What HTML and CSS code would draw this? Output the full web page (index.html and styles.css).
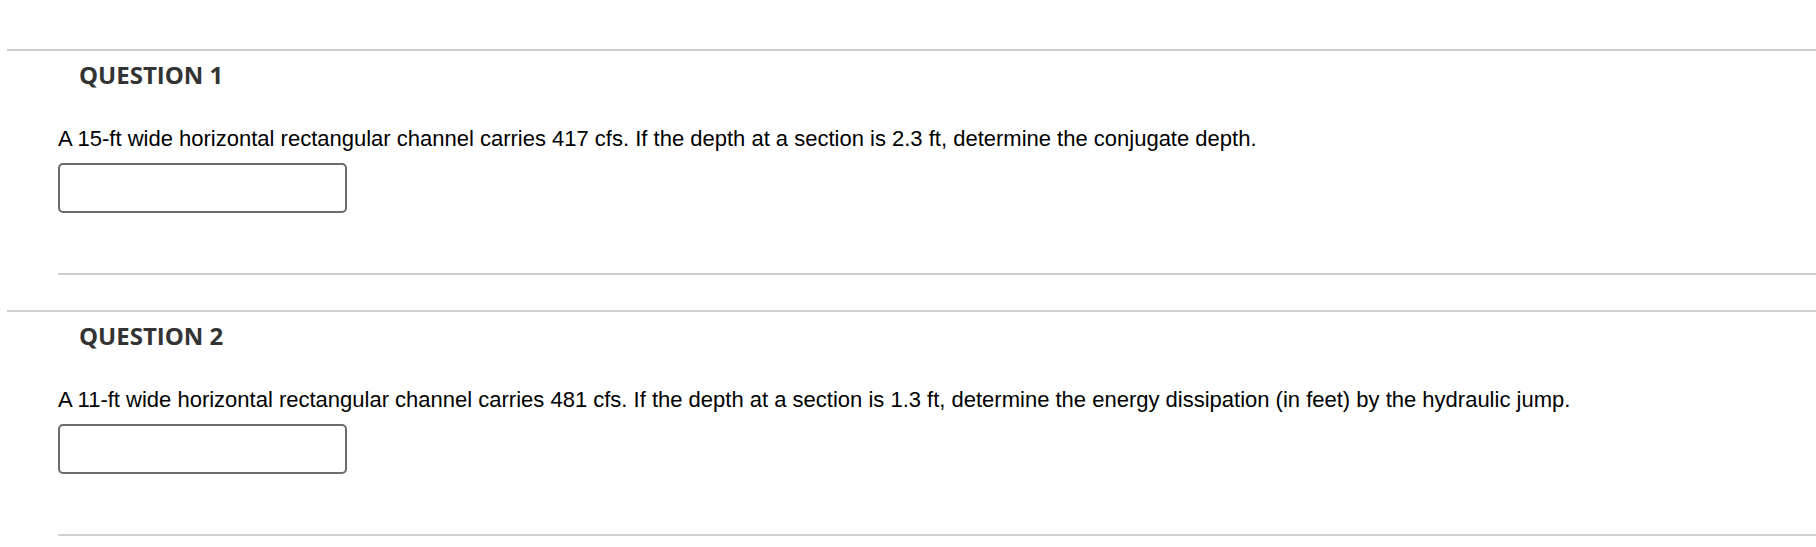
FILE: index.html
```html
<!DOCTYPE html>
<html>
<head>
<meta charset="utf-8">
<link rel="stylesheet" href="styles.css">
</head>
<body>
<div class="page">
  <section class="question">
    <h3 class="q-title">QUESTION 1</h3>
    <div class="q-body">
      <p class="q-text">A 15-ft wide horizontal rectangular channel carries 417 cfs. If the depth at a section is 2.3 ft, determine the conjugate depth.</p>
      <input class="q-input" type="text">
    </div>
  </section>
  <section class="question">
    <h3 class="q-title">QUESTION 2</h3>
    <div class="q-body">
      <p class="q-text">A 11-ft wide horizontal rectangular channel carries 481 cfs. If the depth at a section is 1.3 ft, determine the energy dissipation (in feet) by the hydraulic jump.</p>
      <input class="q-input" type="text">
    </div>
  </section>
</div>
</body>
</html>
```
FILE: styles.css
```css
html, body {
  margin: 0;
  padding: 0;
  background: #fff;
}
.page {
  padding-top: 49px;
  margin-left: 7px;
}
.question {
  border-top: 2px solid #cfcfcf;
  margin-bottom: 35px;
}
.q-title {
  margin: 0;
  padding: 8px 0 0 72px;
  font-family: "Open Sans", sans-serif;
  font-weight: 700;
  font-size: 24px;
  line-height: 32px;
  color: #333;
}
.q-body {
  margin-left: 51px;
  padding-top: 35px;
  padding-bottom: 60px;
  border-bottom: 2px solid #cfcfcf;
}
.q-text {
  margin: 0 0 11px 0;
  font-family: "Liberation Sans", Arial, sans-serif;
  font-size: 22px;
  line-height: 26px;
  color: #000;
}
.q-input {
  display: block;
  box-sizing: border-box;
  width: 289px;
  height: 50px;
  margin: 0;
  border: 2px solid #6b6b6b;
  border-radius: 5px;
  background: #fff;
}
```
